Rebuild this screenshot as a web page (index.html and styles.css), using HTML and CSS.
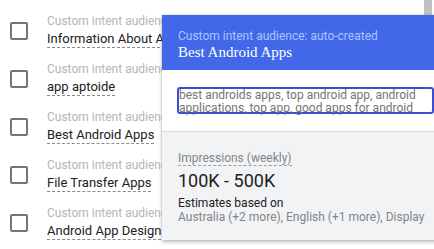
FILE: index.html
```html
<!DOCTYPE html>
<html lang="en">
  <head>
    <meta charset="UTF-8" />
    <meta name="viewport" content="width=device-width, initial-scale=1.0" />
    <title>Audiences</title>
    <link rel="stylesheet" href="styles.css">
  </head>
  <body>
    <ul class="audience-list">
      <li class="audience">
        <span class="checkbox"></span>
        <div class="audience-text">
          <div class="audience-type">Custom intent audience</div>
          <div class="audience-name">Information About Apps</div>
        </div>
      </li>
      <li class="audience">
        <span class="checkbox"></span>
        <div class="audience-text">
          <div class="audience-type">Custom intent audience</div>
          <div class="audience-name">app aptoide</div>
        </div>
      </li>
      <li class="audience">
        <span class="checkbox"></span>
        <div class="audience-text">
          <div class="audience-type">Custom intent audience</div>
          <div class="audience-name">Best Android Apps</div>
        </div>
      </li>
      <li class="audience">
        <span class="checkbox"></span>
        <div class="audience-text">
          <div class="audience-type">Custom intent audience</div>
          <div class="audience-name">File Transfer Apps</div>
        </div>
      </li>
      <li class="audience">
        <span class="checkbox"></span>
        <div class="audience-text">
          <div class="audience-type">Custom intent audience</div>
          <div class="audience-name">Android App Design</div>
        </div>
      </li>
    </ul>

    <div class="scroll-thumb"></div>

    <div class="popup">
      <div class="popup-header">
        <div class="popup-type">Custom intent audience: auto-created</div>
        <div class="popup-title">Best Android Apps</div>
      </div>
      <div class="popup-body">
        <div class="keywords">best androids apps, top android app, android applications, top app, good apps for android</div>
      </div>
      <div class="popup-stats">
        <div class="stats-label"><span>Impressions (weekly)</span></div>
        <div class="stats-value">100K - 500K</div>
        <div class="stats-note">Estimates based on</div>
        <div class="stats-targets">Australia (+2 more), English (+1 more), Display</div>
      </div>
    </div>
  </body>
</html>
```

FILE: styles.css
```css
body {
  margin: 0;
  background-color: #ffffff;
  font-family: Roboto, "Liberation Sans", sans-serif;
  overflow: hidden;
}
.audience-list {
  list-style-type: none;
  margin: 0;
  padding: 7px 0 0 0;
}
.audience {
  display: flex;
  align-items: center;
  height: 48px;
  padding-left: 10px;
}
.checkbox {
  width: 14px;
  height: 14px;
  border: 2px solid #757575;
  border-radius: 2px;
  flex-shrink: 0;
}
.audience-text {
  margin-left: 19px;
  white-space: nowrap;
}
.audience-type {
  font-size: 12px;
  line-height: 14px;
  color: #b5b5b5;
}
.audience-name {
  display: inline-block;
  font-size: 13px;
  line-height: 16px;
  color: #202124;
  border-bottom: 1px dashed #8a8a8a;
}
.scroll-thumb {
  position: absolute;
  top: 0;
  left: 424px;
  width: 8px;
  height: 15px;
  background-color: #c1c1c1;
}
.popup {
  position: absolute;
  top: 15px;
  left: 162px;
  width: 290px;
  background-color: #ffffff;
  box-shadow: 0 2px 4px rgba(0, 0, 0, 0.25), 0 0 2px rgba(0, 0, 0, 0.15);
}
.popup-header {
  background-color: #4267e8;
  height: 55px;
  padding: 14px 16px 0 16px;
  box-sizing: border-box;
}
.popup-type {
  font-size: 12px;
  line-height: 14px;
  color: #a9c6ff;
}
.popup-title {
  font-family: "Liberation Serif", serif;
  font-size: 15px;
  line-height: 18px;
  color: #ffffff;
}
.popup-body {
  padding: 17px 0 17px 15px;
}
.keywords {
  width: 253px;
  height: 23px;
  border: 2px solid #3b4fd2;
  border-radius: 3px;
  font-size: 12px;
  line-height: 13px;
  color: #757575;
}
.popup-stats {
  background-color: #f1f3f4;
  border-top: 1px solid #dadce0;
  padding: 15px 16px 16px 16px;
  white-space: nowrap;
}
.stats-label span {
  font-size: 12px;
  line-height: 16px;
  color: #80868b;
  border-bottom: 1px dashed #9aa0a6;
}
.stats-value {
  margin-top: 4px;
  font-size: 18px;
  line-height: 22px;
  color: #202124;
}
.stats-note {
  margin-top: 4px;
  font-size: 12px;
  line-height: 14px;
  color: #202124;
}
.stats-targets {
  font-size: 12px;
  line-height: 14px;
  color: #80868b;
}
```
